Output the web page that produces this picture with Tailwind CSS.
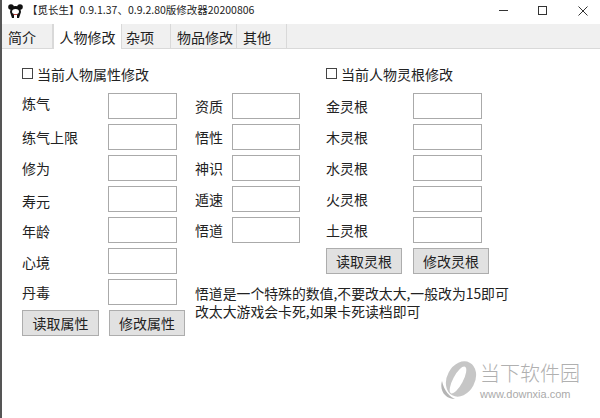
<!DOCTYPE html>
<html><head><meta charset="utf-8"><script src="https://cdn.jsdelivr.net/npm/@tailwindcss/browser@4"></script></head>
<body class="bg-white">
<div class="relative w-[600px] h-[418px] overflow-hidden bg-white border-l-2 border-[#555] text-[14px] text-[#222] leading-none font-['Noto_Sans_CJK_SC','Noto_Sans',sans-serif]">
  <div class="h-[24px] flex items-center pb-[3px]">
    <svg class="ml-[6px] w-[15px] h-[14px]" viewBox="0 0 15 14"><circle cx="3" cy="3" r="2.8" fill="#111"/><circle cx="12" cy="3" r="2.8" fill="#111"/><path d="M3 3 Q7.5 1 12 3 L13 8 L11 14 L9 14 L9 11 L6 11 L6 14 L4 14 L2 8 Z" fill="#111"/><ellipse cx="7.5" cy="7.5" rx="3.5" ry="2.6" fill="#fff"/><path d="M5.5 10 H9.5 V11 H5.5 Z" fill="#b3403c"/></svg>
    <span class="ml-[4px] text-[10.5px] text-[#222]">【觅长生】0.9.1.37、0.9.2.80版修改器20200806</span>
    <div class="ml-auto flex items-center mr-[12px] gap-[30px]">
      <div class="w-[9px] h-px bg-[#333]"></div>
      <div class="w-[9px] h-[9px] border border-[#333]"></div>
      <svg class="w-[10px] h-[10px] ml-px" viewBox="0 0 10 10"><path d="M0.5 0.5 L9.5 9.5 M9.5 0.5 L0.5 9.5" stroke="#333" stroke-width="1"/></svg>
    </div>
  </div>
  <div class="h-[25px] bg-[#f0f0f0] border-b border-[#d9d9d9] flex items-start">
    <div class="w-[51px] h-[24px] pt-[2px] pl-[6px] flex items-center border-r border-[#d9d9d9]">简介</div>
    <div class="w-[69px] h-[25px] bg-white border-x border-[#d9d9d9] flex items-center justify-center relative z-10">人物修改</div>
    <div class="w-[49px] h-[24px] pt-[2px] pl-[4px] flex items-center border-r border-[#d9d9d9]">杂项</div>
    <div class="w-[66px] h-[24px] pt-[2px] pl-[6px] flex items-center border-r border-[#d9d9d9]">物品修改</div>
    <div class="w-[50px] h-[24px] pt-[2px] pl-[6px] flex items-center border-r border-[#d9d9d9]">其他</div>
  </div>
  <div class="flex pl-[19px] pt-[15px]">
    <div class="w-[172px]">
      <div class="h-[19px] flex items-center gap-[4px] pl-px"><span class="w-[11px] h-[11px] border border-[#444]"></span>当前人物属性修改</div>
      <div class="mt-[10px] flex flex-col gap-[5px]">
        <div class="h-[26px] flex items-center justify-between pl-px pr-[16px]"><span class="pb-[6px]">炼气</span><span class="w-[69px] h-[26px] border border-[#aaa]"></span></div>
        <div class="h-[26px] flex items-center justify-between pl-px pr-[16px]">练气上限<span class="w-[69px] h-[26px] border border-[#aaa]"></span></div>
        <div class="h-[26px] flex items-center justify-between pl-px pr-[16px]">修为<span class="w-[69px] h-[26px] border border-[#aaa]"></span></div>
        <div class="h-[26px] flex items-center justify-between pl-px pr-[16px]"><span class="pt-[4px]">寿元</span><span class="w-[69px] h-[26px] border border-[#aaa]"></span></div>
        <div class="h-[26px] flex items-center justify-between pl-px pr-[16px]"><span class="pt-[2px]">年龄</span><span class="w-[69px] h-[26px] border border-[#aaa]"></span></div>
        <div class="h-[26px] flex items-center justify-between pl-px pr-[16px]"><span class="pt-[2px]">心境</span><span class="w-[69px] h-[26px] border border-[#aaa]"></span></div>
        <div class="h-[26px] flex items-center justify-between pl-px pr-[16px]">丹毒<span class="w-[69px] h-[26px] border border-[#aaa]"></span></div>
      </div>
      <div class="mt-[5px] flex gap-[10px] ml-[1px]">
        <div class="w-[77px] h-[26px] bg-[#e1e1e1] border border-[#adadad] flex items-center justify-center">读取属性</div>
        <div class="w-[76px] h-[26px] bg-[#e1e1e1] border border-[#adadad] flex items-center justify-center">修改属性</div>
      </div>
    </div>
    <div class="w-[133px] pl-[2px]">
      <div class="mt-[29px] flex flex-col gap-[5px]">
        <div class="h-[26px] w-[105px] flex items-center justify-between">资质<span class="w-[68px] h-[26px] border border-[#aaa]"></span></div>
        <div class="h-[26px] w-[105px] flex items-center justify-between">悟性<span class="w-[68px] h-[26px] border border-[#aaa]"></span></div>
        <div class="h-[26px] w-[105px] flex items-center justify-between">神识<span class="w-[68px] h-[26px] border border-[#aaa]"></span></div>
        <div class="h-[26px] w-[105px] flex items-center justify-between">遁速<span class="w-[68px] h-[26px] border border-[#aaa]"></span></div>
        <div class="h-[26px] w-[105px] flex items-center justify-between">悟道<span class="w-[68px] h-[26px] border border-[#aaa]"></span></div>
      </div>
      <div class="mt-[41px] w-[330px] text-[13.85px] leading-[18px]">悟道是一个特殊的数值,不要改太大,一般改为15即可<br>改太大游戏会卡死,如果卡死读档即可</div>
    </div>
    <div class="w-[170px]">
      <div class="h-[19px] flex items-center gap-[4px]"><span class="w-[11px] h-[11px] border border-[#444]"></span>当前人物灵根修改</div>
      <div class="mt-[10px] flex flex-col gap-[5px]">
        <div class="h-[26px] w-[156px] flex items-center justify-between">金灵根<span class="w-[69px] h-[26px] border border-[#aaa]"></span></div>
        <div class="h-[26px] w-[156px] flex items-center justify-between">木灵根<span class="w-[69px] h-[26px] border border-[#aaa]"></span></div>
        <div class="h-[26px] w-[156px] flex items-center justify-between">水灵根<span class="w-[69px] h-[26px] border border-[#aaa]"></span></div>
        <div class="h-[26px] w-[156px] flex items-center justify-between">火灵根<span class="w-[69px] h-[26px] border border-[#aaa]"></span></div>
        <div class="h-[26px] w-[156px] flex items-center justify-between">土灵根<span class="w-[69px] h-[26px] border border-[#aaa]"></span></div>
      </div>
      <div class="mt-[5px] flex gap-[11px]">
        <div class="w-[76px] h-[26px] bg-[#e1e1e1] border border-[#adadad] flex items-center justify-center">读取灵根</div>
        <div class="w-[76px] h-[26px] bg-[#e1e1e1] border border-[#adadad] flex items-center justify-center">修改灵根</div>
      </div>
    </div>
  </div>
  <div class="absolute left-[438px] top-[361px] flex items-center gap-[3px]">
    <svg class="w-[37px] h-[39px]" viewBox="0 0 37 39"><ellipse cx="21" cy="18" rx="14" ry="18.5" transform="rotate(28 21 18)" fill="#c6c6c6"/><path d="M2 20 C-1 30 6 38 15 38 C10 36 4 30 2 20 Z" fill="#b4b4b4"/><ellipse cx="18" cy="19" rx="5" ry="15" transform="rotate(28 18 19)" fill="#fff"/></svg>
    <div class="flex flex-col text-[#b0b0b0]"><span class="text-[20px] h-[22px] leading-[22px] font-light">当下软件园</span><span class="mt-[4px] text-[11px] h-[12px] leading-[12px] font-['Liberation_Sans',sans-serif] text-[#aaa]">www.downxia.com</span></div>
  </div>
</div>
</body></html>
